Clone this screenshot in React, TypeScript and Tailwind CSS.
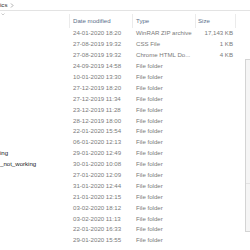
import React from "react";

const rows: [string, string, string, string][] = [
  ["", "24-01-2020 18:20", "WinRAR ZIP archive", "17,143 KB"],
  ["", "27-08-2019 19:32", "CSS File", "1 KB"],
  ["", "27-08-2019 19:32", "Chrome HTML Do...", "4 KB"],
  ["", "24-09-2019 14:58", "File folder", ""],
  ["", "10-01-2020 13:30", "File folder", ""],
  ["", "27-12-2019 18:20", "File folder", ""],
  ["", "27-12-2019 11:34", "File folder", ""],
  ["", "23-12-2019 11:28", "File folder", ""],
  ["", "28-12-2019 18:00", "File folder", ""],
  ["", "22-01-2020 15:54", "File folder", ""],
  ["", "06-01-2020 12:13", "File folder", ""],
  ["ing", "29-01-2020 12:49", "File folder", ""],
  ["_not_working", "30-01-2020 10:08", "File folder", ""],
  ["", "27-01-2020 12:09", "File folder", ""],
  ["", "31-01-2020 12:44", "File folder", ""],
  ["", "21-01-2020 12:15", "File folder", ""],
  ["", "03-02-2020 18:12", "File folder", ""],
  ["", "03-02-2020 11:13", "File folder", ""],
  ["", "22-01-2020 16:33", "File folder", ""],
  ["", "29-01-2020 15:55", "File folder", ""],
];

export default function App() {
  return (
    <div
      className="relative w-[250px] h-[250px] overflow-hidden bg-white text-[6.1px] leading-none"
      style={{ fontFamily: '"Liberation Sans", Arial, sans-serif' }}
    >
      {/* address bar */}
      <div className="h-[11px] border-b border-[#e3e3e3] flex items-center gap-[3px] text-[#2a2a2a]">
        <span>ics</span>
        <svg width="4" height="5" viewBox="0 0 4 5">
          <path d="M1 0.5 L3 2.5 L1 4.5" fill="none" stroke="#777" strokeWidth="0.6" />
        </svg>
      </div>
      {/* sort chevron */}
      <div className="relative h-[3px]">
        <svg className="absolute left-[1px] top-[2px]" width="4" height="3" viewBox="0 0 4 3">
          <path d="M0.5 0.5 L2 2 L3.5 0.5" fill="none" stroke="#aaa" strokeWidth="0.6" />
        </svg>
      </div>
      {/* header */}
      <div className="flex h-[14px] items-center text-[#5b6f8a]">
        <div className="w-[69px] h-full" />
        <div className="w-[63px] h-full border-l border-[#ebebeb] pl-[3px] flex items-center">Date modified</div>
        <div className="w-[63px] h-full border-l border-[#ebebeb] pl-[3px] flex items-center">Type</div>
        <div className="w-[40px] h-full border-l border-[#ebebeb] pl-[2px] flex items-center">Size</div>
        <div className="w-[10px] h-full border-l border-[#ebebeb]" />
      </div>
      {/* rows */}
      <div className="flex flex-col">
        {rows.map((r, i) => (
          <div key={i} className="flex h-[10.9px] items-center text-[#7a7a7a]">
            <div className="w-[69px] text-[#222] whitespace-nowrap overflow-hidden">{r[0]}</div>
            <div className="w-[63px] pl-[4px] whitespace-nowrap">{r[1]}</div>
            <div className="w-[63px] pl-[4px] whitespace-nowrap">{r[2]}</div>
            <div className="w-[38px] text-right whitespace-nowrap">{r[3]}</div>
          </div>
        ))}
      </div>
      {/* right-side pane edge */}
      <div className="absolute left-[245px] top-[59px] w-[10px] h-[173px] border border-[#d4d4d4] bg-[#f5f5f5]">
        <div className="mt-[123px] h-px bg-[#e3e3e3]" />
      </div>
    </div>
  );
}
